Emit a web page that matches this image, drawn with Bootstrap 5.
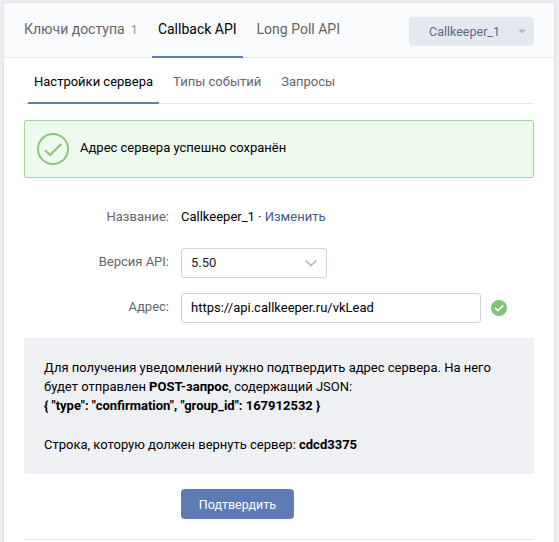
<!DOCTYPE html>
<html lang="ru">
<head>
<meta charset="utf-8">
<meta name="viewport" content="width=device-width, initial-scale=1">
<title>Callback API</title>
<link href="https://cdn.jsdelivr.net/npm/bootstrap@5.3.0/dist/css/bootstrap.min.css" rel="stylesheet">
<style>
body{background:#ebecf0;font-family:Roboto,"Noto Sans",sans-serif;font-size:13px;line-height:19.5px;color:#000;overflow:hidden}
.panel{margin:2px 4px 0 3px;height:560px;background:#fff;border:1px solid #e1e2e6;border-radius:4px}
.panel-head{height:55px;background:#fafbfd;border-bottom:1px solid #e5e6ea;padding:0 20px 0 14px;border-radius:4px 4px 0 0}
.tabs{--bs-nav-link-color:#656565;--bs-nav-link-hover-color:#656565;gap:8px}
.tabs .nav-link{padding:0 6px;border-bottom:2px solid transparent}
.tabs .nav-link.active{color:#000;border-color:#5e7db8}
.tabs-main{font-size:14px;line-height:53px}
.tabs-main .nav-link{height:55px}
.tabs-main .count{font-size:13px;color:#939393;margin-left:6px}
.tabs-sub{height:46px;margin:0 20px;padding-left:4px;border-bottom:1px solid #e5e6ea;line-height:48px}
.tabs-sub .nav-link{height:46px}
.server-btn{width:125px;height:29px;margin-top:14px;padding:0 7px 0 20px;background:#e4e9f0;color:#56668a;font-size:12.5px;line-height:29px;border:0;border-radius:4px}
.saved{margin:16px 20px 0;height:58px;padding:0 12px;background:#eefaee;border:1px solid #a5d49b;border-radius:2px;gap:11px}
.saved span{padding-bottom:2px}
.form-line{gap:12px;margin:15px 0 0 20px}
.form-line-name{margin-top:29px}
.form-line-version{margin-top:21px}
.form-label-vk{width:145px;text-align:right;color:#656565}
.align-items-center>.form-label-vk{padding-bottom:2px}
.link-vk{color:#3a5a8f;text-decoration:none}
.field{height:30px;padding:0 9px;border:1px solid #d0d3de;border-radius:3px;font-size:13px;color:#000}
.field-version{width:146px;color:#222}
.field-url{width:300px}
.field-ok{margin-left:-2px}
.info{margin:15px 20px 0;height:136px;padding:20px;background:#eff0f4;line-height:19.36px}
.info b{font-weight:700}
.confirm{width:113px;height:30px;margin:15px 0 0 177px;padding:1px 0 0;background:#5e7bb5;color:#fff;font-size:12.5px;line-height:29px;border:0;border-radius:4px}
.end-line{margin:20px 20px 0;border-top:1px solid #e5e6ea}
</style>
<script src="https://cdn.jsdelivr.net/npm/bootstrap@5.3.0/dist/js/bootstrap.bundle.min.js"></script>
</head>
<body>
<main class="panel">
  <header class="panel-head d-flex justify-content-between align-items-start">
    <nav class="nav tabs tabs-main flex-nowrap text-nowrap">
      <a class="nav-link" href="#">Ключи доступа<span class="count">1</span></a>
      <a class="nav-link active" href="#">Callback API</a>
      <a class="nav-link" href="#">Long Poll API</a>
    </nav>
    <button class="btn server-btn d-flex align-items-center justify-content-between" type="button">Callkeeper_1
      <svg width="10" height="5" viewBox="0 0 10 5"><path d="M1 .5h8L5 4.5z" fill="#a9b7c9"/></svg>
    </button>
  </header>
  <nav class="nav tabs tabs-sub">
    <a class="nav-link active" href="#">Настройки сервера</a>
    <a class="nav-link" href="#">Типы событий</a>
    <a class="nav-link" href="#">Запросы</a>
  </nav>
  <div class="saved d-flex align-items-center" role="alert">
    <svg width="32" height="32" viewBox="0 0 32 32" fill="none" stroke="#8cc47a" stroke-width="2"><circle cx="16" cy="16" r="15"/><path d="M8 17.2l5 4.8L24.300 11"/></svg>
    <span>Адрес сервера успешно сохранён</span>
  </div>
  <div class="form-line form-line-name d-flex">
    <span class="form-label-vk">Название:</span>
    <span>Callkeeper_1 · <a class="link-vk" href="#">Изменить</a></span>
  </div>
  <div class="form-line form-line-version d-flex align-items-center">
    <span class="form-label-vk">Версия API:</span>
    <div class="field field-version d-flex align-items-center justify-content-between">5.50
      <svg width="12" height="8" viewBox="0 0 12 8" fill="none" stroke="#b0b2b8" stroke-width="1.500"><path d="M.7 1.500L6 6.700l5.300-5.200"/></svg>
    </div>
  </div>
  <div class="form-line d-flex align-items-center">
    <label class="form-label-vk" for="url">Адрес:</label>
    <input class="field field-url" id="url" type="text" value="https://api.callkeeper.ru/vkLead">
    <svg class="field-ok" width="16" height="16" viewBox="0 0 16 16"><circle cx="8" cy="8" r="8" fill="#7dc575"/><path d="M4.500 8.300l2.500 2.400 4.700-4.900" fill="none" stroke="#fff" stroke-width="1.800" stroke-linecap="round" stroke-linejoin="round"/></svg>
  </div>
  <div class="info">
    Для получения уведомлений нужно подтвердить адрес сервера. На него будет отправлен <b>POST-запрос</b>, содержащий JSON:<br>
    <b>{ "type": "confirmation", "group_id": 167912532 }</b><br><br>
    Строка, которую должен вернуть сервер: <b>cdcd3375</b>
  </div>
  <button class="btn confirm d-block" type="button">Подтвердить</button>
  <div class="end-line"></div>
</main>
</body>
</html>
